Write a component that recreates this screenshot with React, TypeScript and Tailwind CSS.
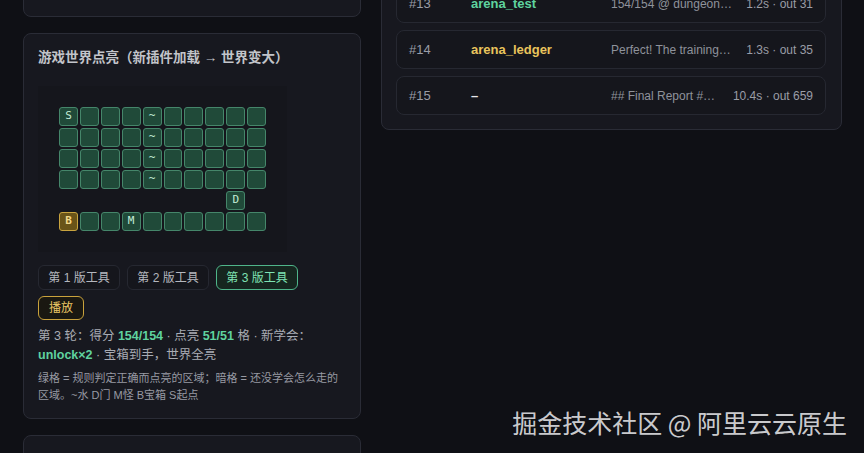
const runs = [
  { n: "#13", name: "arena_test", tone: "text-[#5fd39f]", preview: "154/154 @ dungeon world, all tiles lit", meta: "1.2s · out 31" },
  { n: "#14", name: "arena_ledger", tone: "text-[#e9c45c]", preview: "Perfect! The training run finished", meta: "1.3s · out 35" },
  { n: "#15", name: "–", tone: "text-[#e6e7eb]", preview: "## Final Report ## summary", meta: "10.4s · out 659" },
];

// 6 rows x 10 cols; "." = lit tile, " " = dark (not shown)
const map = [
  "S...~.....",
  "....~.....",
  "....~.....",
  "....~.....",
  "        D ",
  "B..M......",
];

function Cell({ ch }: { ch: string }) {
  if (ch === " ") return <div className="h-[19px] w-[19px]" />;
  if (ch === "B") {
    return (
      <div className="flex h-[19px] w-[19px] items-center justify-center rounded-[3px] border border-[#c9a43f] bg-[#6a5418] text-[11px] font-bold text-[#f3d98a]">
        B
      </div>
    );
  }
  return (
    <div className="flex h-[19px] w-[19px] items-center justify-center rounded-[3px] border border-[#45866a] bg-[#204a39] text-[11px] text-[#c3ecd6]">
      {ch === "." ? "" : ch}
    </div>
  );
}

function WorldCard() {
  return (
    <div className="rounded-lg border border-[#2a2c36] bg-[#17181f] px-[14px] pt-[15px] pb-[14px]">
      <h3 className="text-[13.5px] font-bold leading-[18px] text-[#c2c4ca]">游戏世界点亮（新插件加载 → 世界变大）</h3>

      <div className="mt-[19px] w-[249px] bg-[#15161c] p-[21px]" style={{ fontFamily: '"DejaVu Sans Mono", monospace' }}>
        <div className="flex flex-col gap-[2px]">
          {map.map((row, r) => (
            <div key={r} className="flex gap-[2px]">
              {row.split("").map((ch, c) => (
                <Cell key={c} ch={ch} />
              ))}
            </div>
          ))}
        </div>
      </div>

      <div className="mt-[13px] flex gap-[7px]">
        {[1, 2, 3].map((v) => (
          <button
            key={v}
            className={
              v === 3
                ? "h-[25px] w-[82px] rounded-md border border-[#4fb58a] bg-[#16261f] text-[12px] text-[#7fe3b4]"
                : "h-[25px] w-[82px] rounded-md border border-[#262831] bg-[#15161c] text-[12px] text-[#b4b7be]"
            }
          >
            第 {v} 版工具
          </button>
        ))}
      </div>
      <button className="mt-[6px] h-[24px] w-[46px] rounded-md border border-[#c9a23c] bg-[#1a1811] text-[12px] text-[#ecc766]">
        播放
      </button>

      <p className="mt-[7px] text-[12.5px] leading-[19px] text-[#a9acb4]">
        第 3 轮：得分 <b className="text-[#5fd39f]">154/154</b> · 点亮 <b className="text-[#5fd39f]">51/51</b> 格 · 新学会：
        <b className="text-[#5fd39f]">unlock×2</b> · 宝箱到手，世界全亮
      </p>
      <p className="mt-[5px] text-[11px] leading-[17px] text-[#979aa3]">
        绿格 = 规则判定正确而点亮的区域；暗格 = 还没学会怎么走的区域。~水 D门 M怪 B宝箱 S起点
      </p>
    </div>
  );
}

export default function App() {
  return (
    <div
      className="relative h-[453px] overflow-hidden bg-[#0f1015]"
      style={{ fontFamily: '"Liberation Sans", "Noto Sans CJK SC", sans-serif' }}
    >
      <div className="grid grid-cols-[338px_461px] items-start gap-5 pl-[23px]">
        <div className="flex flex-col gap-4">
          <div className="-mt-[40px] h-[57px] rounded-lg border border-[#2a2c36] bg-[#17181f]" />
          <WorldCard />
          <div className="h-[80px] rounded-lg border border-[#2a2c36] bg-[#17181f]" />
        </div>

        <div className="-mt-[32px] rounded-lg border border-[#2a2c36] bg-[#17181f] pt-[15px] pr-[15px] pb-[14px] pl-[14px]">
          <div className="flex flex-col gap-[7px]">
            {runs.map((r) => (
              <div
                key={r.n}
                className="flex h-[39px] items-center rounded-lg border border-[#262831] bg-[#15161c] pr-[12px] pl-[12px] text-[12px]"
              >
                <span className="w-[62px] shrink-0 text-[13px] text-[#9a9da6]">{r.n}</span>
                <span className={`w-[140px] shrink-0 text-[13px] font-bold ${r.tone}`}>{r.name}</span>
                <span className="mr-[14px] min-w-0 flex-1 truncate text-[#8f929b]">{r.preview}</span>
                <span className="shrink-0 text-[#9a9da6]">{r.meta}</span>
              </div>
            ))}
          </div>
        </div>
      </div>

      <div className="absolute right-[17px] bottom-[16px] text-[25px] leading-[30px] text-[#e4e4e7]/90" style={{ fontFamily: '"Noto Sans CJK SC", sans-serif' }}>
        掘金技术社区 @ 阿里云云原生
      </div>
    </div>
  );
}
